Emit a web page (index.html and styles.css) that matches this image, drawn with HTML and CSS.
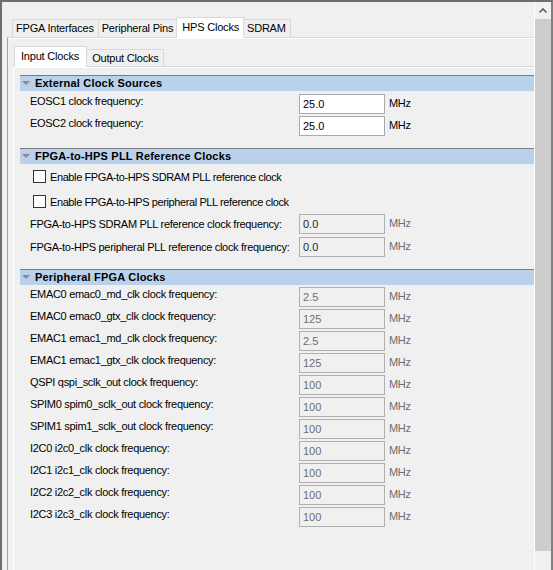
FILE: index.html
```html
<!DOCTYPE html>
<html>
<head>
<meta charset="utf-8">
<link rel="stylesheet" href="styles.css">
</head>
<body>
<div class="window">
  <div class="main">
    <div class="tabbar outer-tabs">
      <div class="tab">FPGA Interfaces</div>
      <div class="tab">Peripheral Pins</div>
      <div class="tab selected">HPS Clocks</div>
      <div class="tab">SDRAM</div>
    </div>
    <div class="pane outer-pane">
      <div class="tabbar inner-tabs">
        <div class="tab selected">Input Clocks</div>
        <div class="tab">Output Clocks</div>
      </div>
      <div class="pane inner-pane">

        <div class="section">
          <div class="sec-header"><span class="tri"></span>External Clock Sources</div>
          <div class="rows">
            <div class="row"><span class="label">EOSC1 clock frequency:</span><span class="field">25.0</span><span class="unit">MHz</span></div>
            <div class="row"><span class="label">EOSC2 clock frequency:</span><span class="field">25.0</span><span class="unit">MHz</span></div>
          </div>
        </div>

        <div class="section">
          <div class="sec-header"><span class="tri"></span>FPGA-to-HPS PLL Reference Clocks</div>
          <div class="rows tight">
            <div class="check-row"><span class="box"></span><span>Enable FPGA-to-HPS SDRAM PLL reference clock</span></div>
            <div class="check-row"><span class="box"></span><span>Enable FPGA-to-HPS peripheral PLL reference clock</span></div>
            <div class="row centered"><span class="label">FPGA-to-HPS SDRAM PLL reference clock frequency:</span><span class="field disabled dark">0.0</span><span class="unit disabled">MHz</span></div>
            <div class="row centered"><span class="label">FPGA-to-HPS peripheral PLL reference clock frequency:</span><span class="field disabled dark">0.0</span><span class="unit disabled">MHz</span></div>
          </div>
        </div>

        <div class="section">
          <div class="sec-header"><span class="tri"></span>Peripheral FPGA Clocks</div>
          <div class="rows snug">
            <div class="row"><span class="label">EMAC0 emac0_md_clk clock frequency:</span><span class="field disabled">2.5</span><span class="unit disabled">MHz</span></div>
            <div class="row"><span class="label">EMAC0 emac0_gtx_clk clock frequency:</span><span class="field disabled">125</span><span class="unit disabled">MHz</span></div>
            <div class="row"><span class="label">EMAC1 emac1_md_clk clock frequency:</span><span class="field disabled">2.5</span><span class="unit disabled">MHz</span></div>
            <div class="row"><span class="label">EMAC1 emac1_gtx_clk clock frequency:</span><span class="field disabled">125</span><span class="unit disabled">MHz</span></div>
            <div class="row"><span class="label">QSPI qspi_sclk_out clock frequency:</span><span class="field disabled">100</span><span class="unit disabled">MHz</span></div>
            <div class="row"><span class="label">SPIM0 spim0_sclk_out clock frequency:</span><span class="field disabled">100</span><span class="unit disabled">MHz</span></div>
            <div class="row"><span class="label">SPIM1 spim1_sclk_out clock frequency:</span><span class="field disabled">100</span><span class="unit disabled">MHz</span></div>
            <div class="row"><span class="label">I2C0 i2c0_clk clock frequency:</span><span class="field disabled">100</span><span class="unit disabled">MHz</span></div>
            <div class="row"><span class="label">I2C1 i2c1_clk clock frequency:</span><span class="field disabled">100</span><span class="unit disabled">MHz</span></div>
            <div class="row"><span class="label">I2C2 i2c2_clk clock frequency:</span><span class="field disabled">100</span><span class="unit disabled">MHz</span></div>
            <div class="row"><span class="label">I2C3 i2c3_clk clock frequency:</span><span class="field disabled">100</span><span class="unit disabled">MHz</span></div>
          </div>
        </div>

      </div>
    </div>
  </div>
  <div class="scrollbar">
    <div class="sb-up">
      <svg width="16" height="17" viewBox="0 0 16 17"><path d="M4.5 10.5 L8 7 L11.5 10.5" fill="none" stroke="#606060" stroke-width="1.6"/></svg>
    </div>
    <div class="sb-thumb"></div>
  </div>
</div>
</body>
</html>
```

FILE: styles.css
```css
* { box-sizing: border-box; }
html, body { margin: 0; padding: 0; background: #f0f0f0; }
body {
  font-family: "Liberation Sans", Arial, sans-serif;
  font-size: 11px;
  letter-spacing: -0.3px;
  color: #000;
}
.window {
  width: 553px;
  height: 570px;
  display: flex;
  border-top: 2px solid #6e6e6e;
  border-left: 2px solid #6e6e6e;
  border-right: 2px solid #808080;
  background: #f0f0f0;
  overflow: hidden;
}
.main {
  width: 532px;
  flex: none;
  overflow: hidden;
  display: flex;
  flex-direction: column;
}
.tabbar {
  display: flex;
  align-items: flex-end;
  position: relative;
  z-index: 1;
  flex: none;
}
.tab {
  border: 1px solid #d9d9d9;
  border-bottom: none;
  background: #f0f0f0;
  white-space: nowrap;
  margin-left: -1px;
  letter-spacing: -0.2px;
}
.tab.selected {
  background: #fff;
  margin-bottom: -1px;
}
.outer-tabs {
  height: 35px;
  padding-left: 11px;
}
.outer-tabs .tab {
  height: 18px;
  line-height: 17px;
  padding: 0 4px 0 3px;
}
.outer-tabs .tab.selected {
  height: 21px;
  line-height: 18px;
  padding: 0 5px 0 5px;
  margin-left: -2px;
  margin-right: -1px;
}
.pane {
  border-top: 1px solid #d9d9d9;
  box-shadow: inset 0 1px 0 #fff;
  flex: 1;
}
.outer-pane {
  margin-left: 5px;
  border-left: 1px solid #a0a0a0;
  padding-left: 5px;
  display: flex;
  flex-direction: column;
}
.inner-tabs {
  height: 28px;
  padding-left: 1px;
}
.inner-tabs .tab {
  height: 17px;
  line-height: 16px;
  padding: 0 4px 0 5px;
}
.inner-tabs .tab.selected {
  height: 21px;
  line-height: 19px;
  padding: 0 7px 0 6px;
  margin-left: 0;
}
.inner-pane {
  border-left: 1px solid #fff;
  padding: 8px 0 0 6px;
  display: flex;
  flex-direction: column;
  gap: 12px;
}
.sec-header {
  height: 16px;
  border-top: 1px solid #7c7c7c;
  background: #b9d1ea;
  font-weight: bold;
  letter-spacing: 0.2px;
  line-height: 15px;
  padding-left: 15px;
  position: relative;
  white-space: nowrap;
}
.tri {
  position: absolute;
  left: 2px;
  top: 5px;
  width: 0;
  height: 0;
  border-left: 4px solid transparent;
  border-right: 4px solid transparent;
  border-top: 4px solid #8a8a8a;
}
.rows {
  display: flex;
  flex-direction: column;
  gap: 2px;
  padding-top: 3px;
}
.rows.snug { padding-top: 2px; }
.rows.tight { padding-top: 0; gap: 0; }
.row.centered + .row.centered { margin-top: 3px; }
.row {
  display: flex;
  height: 20px;
  padding-left: 10px;
  white-space: nowrap;
}
.label {
  width: 269px;
  flex: none;
  line-height: 14px;
}
.row.centered .label { line-height: 20px; }
.field {
  width: 86px;
  height: 20px;
  flex: none;
  border: 1px solid #a9a9a9;
  background: #fff;
  padding-left: 3px;
  line-height: 18px;
  color: #000;
  letter-spacing: 0;
}
.field.disabled {
  background: #f0f0f0;
  border-color: #b0b0b0;
  color: #6d6d6d;
}
.field.disabled.dark { color: #1e1e2e; }
.unit {
  margin-left: 4px;
  line-height: 18px;
  color: #000;
}
.unit.disabled { color: #6d6d6d; }
.check-row {
  display: flex;
  align-items: center;
  height: 25px;
  padding-left: 13px;
  white-space: nowrap;
  letter-spacing: -0.4px;
}
.box {
  width: 13px;
  height: 13px;
  border: 1px solid #333;
  background: #fff;
  margin-right: 4px;
  flex: none;
}
.scrollbar {
  width: 17px;
  flex: none;
  border-left: 1px solid #fff;
  display: flex;
  flex-direction: column;
}
.sb-up { height: 17px; flex: none; }
.sb-up svg { display: block; }
.sb-thumb {
  height: 532px;
  background: #cdcdcd;
  flex: none;
}
```
